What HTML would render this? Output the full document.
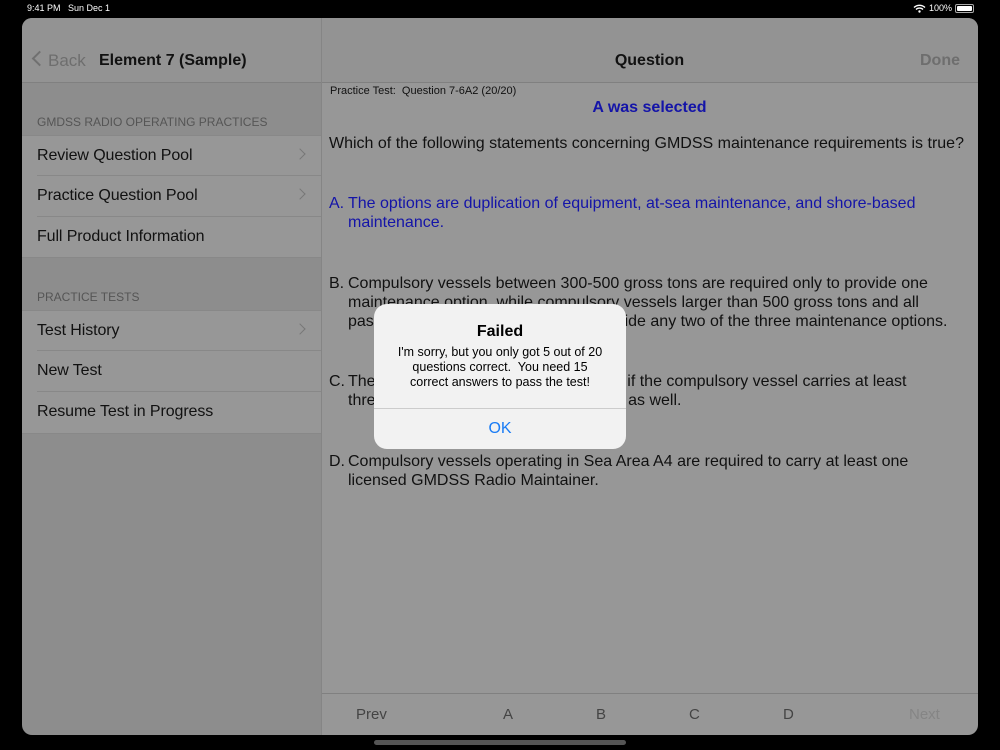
<!DOCTYPE html>
<html><head><meta charset="utf-8"><style>
*{margin:0;padding:0;box-sizing:border-box}
body{width:1000px;height:750px;background:#000;font-family:"Liberation Sans",Arial,sans-serif;position:relative;overflow:hidden}
.a{position:absolute;white-space:nowrap}
.st{color:#fff;font-size:9px;top:3px}
#left{position:absolute;left:22px;top:18px;width:299px;height:717px;background:#8d8d8d;border-radius:10px 0 0 10px;overflow:hidden}
#right{position:absolute;left:321px;top:18px;width:657px;height:717px;background:#979797;border-radius:0 10px 10px 0;overflow:hidden}
.nav{position:absolute;left:0;top:0;right:0;height:65px;background:#939393;border-bottom:1px solid #808080}
.cell{position:absolute;left:0;width:299px;height:41px;background:#979797;font-size:16px;color:#111;padding:11px 0 0 15px;letter-spacing:-0.1px}
.sep{position:absolute;left:15px;right:0;bottom:0;height:1px;background:#888}
.chev{position:absolute;right:17px;top:14px;width:8px;height:8px;border-right:1.5px solid #777;border-top:1.5px solid #777;transform:rotate(45deg)}
.hdr{position:absolute;left:15px;font-size:12px;color:#555}
.q{font-size:16px;color:#111;line-height:19px}
.blue{color:#1414a8}
.tb{font-size:15px;color:#444;top:706px}
.opt{position:absolute;left:8px;white-space:nowrap;padding-left:19px}
.opt b{position:absolute;left:0;font-weight:normal}
</style></head><body>
<div class="a st" style="left:27px">9:41 PM&nbsp;&nbsp;&nbsp;Sun Dec 1</div>
<div class="a st" style="left:929px">100%</div>
<svg class="a" style="left:913px;top:4px" width="13" height="9" viewBox="0 0 13 9"><path d="M1 3.5 A8 8 0 0 1 12 3.5 M3 5.5 A5 5 0 0 1 10 5.5" stroke="#fff" stroke-width="1.4" fill="none"/><circle cx="6.5" cy="7.5" r="1.2" fill="#fff"/></svg>
<div class="a" style="left:955px;top:4px;width:19px;height:9px;border:1px solid #aaa;border-radius:2px;padding:1px"><div style="background:#fff;width:100%;height:100%;border-radius:1px"></div></div>

<div id="left">
 <div class="nav">
  <div class="a" style="left:12px;top:35px;width:11px;height:11px;border-left:2px solid #707070;border-bottom:2px solid #707070;transform:rotate(45deg)"></div>
  <div class="a" style="left:26px;top:33px;font-size:17px;color:#6e6e6e">Back</div>
  <div class="a" style="left:77px;top:34px;font-size:16px;font-weight:bold;color:#111">Element 7 (Sample)</div>
 </div>
 <div class="hdr a" style="top:97px">GMDSS RADIO OPERATING PRACTICES</div>
 <div class="cell" style="top:117px;border-top:1px solid #888">Review Question Pool<div class="chev"></div><div class="sep"></div></div>
 <div class="cell" style="top:158px">Practice Question Pool<div class="chev"></div><div class="sep"></div></div>
 <div class="cell" style="top:199px;border-bottom:1px solid #888">Full Product Information</div>
 <div class="hdr a" style="top:272px">PRACTICE TESTS</div>
 <div class="cell" style="top:292px;border-top:1px solid #888">Test History<div class="chev"></div><div class="sep"></div></div>
 <div class="cell" style="top:333px">New Test<div class="sep"></div></div>
 <div class="cell" style="top:374px;border-bottom:1px solid #888;height:42px">Resume Test in Progress</div>
</div>

<div id="right">
 <div class="nav">
  <div class="a" style="left:0;right:0;top:34px;text-align:center;font-size:16px;font-weight:bold;color:#111">Question</div>
  <div class="a" style="left:599px;top:34px;font-size:16px;font-weight:bold;color:#6e6e6e">Done</div>
 </div>
 <div class="a" style="left:9px;top:67px;font-size:11px;color:#111">Practice Test:&nbsp; Question 7-6A2 (20/20)</div>
 <div class="a blue" style="left:0;right:0;top:81px;text-align:center;font-size:16px;font-weight:bold">A was selected</div>
 <div class="a q" style="left:8px;top:116px">Which of the following statements concerning GMDSS maintenance requirements is true?</div>
 <div class="opt q blue" style="top:176px"><b>A.</b>The options are duplication of equipment, at-sea maintenance, and shore-based<br>maintenance.</div>
 <div class="opt q" style="top:256px"><b>B.</b>Compulsory vessels between 300-500 gross tons are required only to provide one<br>maintenance option, while compulsory vessels larger than 500 gross tons and all<br>passenger vessels are required to provide any two of the three maintenance options.</div>
 <div class="opt q" style="top:354px"><b>C.</b>The shore-based option is not required if the compulsory vessel carries at least<br>three GMDSS Radio Operators aboard as well.</div>
 <div class="opt q" style="top:434px"><b>D.</b>Compulsory vessels operating in Sea Area A4 are required to carry at least one<br>licensed GMDSS Radio Maintainer.</div>
 <div class="a" style="left:0;right:0;top:675px;height:1px;background:#808080"></div>
 <div class="a" style="left:0;top:0;width:1px;height:717px;background:#858585"></div>
</div>
<div class="a tb" style="left:356px">Prev</div>
<div class="a tb" style="left:503px">A</div>
<div class="a tb" style="left:596px">B</div>
<div class="a tb" style="left:689px">C</div>
<div class="a tb" style="left:783px">D</div>
<div class="a tb" style="left:909px;color:#858585">Next</div>
<div class="a" style="left:374px;top:740px;width:252px;height:5px;border-radius:3px;background:#555"></div>

<div class="a" style="left:374px;top:304px;width:252px;height:145px;background:#f2f2f2;border-radius:13px;overflow:hidden">
 <div class="a" style="left:0;right:0;top:19px;text-align:center;font-size:16px;font-weight:bold;color:#000">Failed</div>
 <div class="a" style="left:0;right:0;top:41px;text-align:center;font-size:12.5px;line-height:15px;color:#000">I'm sorry, but you only got 5 out of 20<br>questions correct.&nbsp; You need 15<br>correct answers to pass the test!</div>
 <div class="a" style="left:0;right:0;top:104px;height:1px;background:#ccc"></div>
 <div class="a" style="left:0;right:0;top:116px;text-align:center;font-size:16px;color:#1a7cf5">OK</div>
</div>
</body></html>
